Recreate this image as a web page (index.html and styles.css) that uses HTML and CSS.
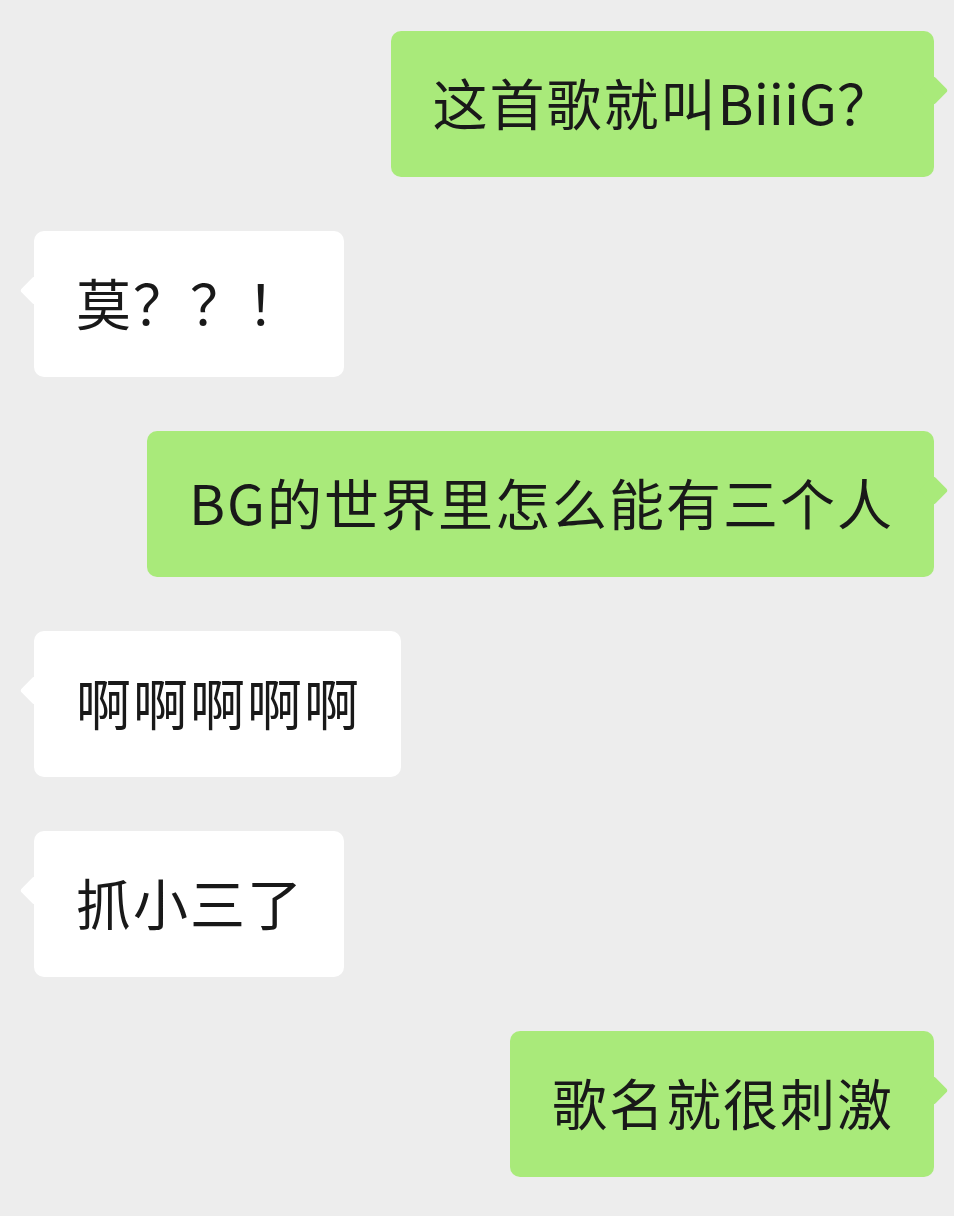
FILE: index.html
```html
<!DOCTYPE html>
<html>
	<head>
		<meta charset="utf-8">
		<title>Chat</title>
		<link rel="stylesheet" href="styles.css">
	</head>
	<body>
		<div class="chat">
			<div class="msg mine">这首歌就叫<span class="latin">BiiiG</span>？</div>
			<div class="msg theirs">莫？？！</div>
			<div class="msg mine">BG的世界里怎么能有三个人</div>
			<div class="msg theirs">啊啊啊啊啊</div>
			<div class="msg theirs">抓小三了</div>
			<div class="msg mine">歌名就很刺激</div>
		</div>
	</body>
</html>
```

FILE: styles.css
```css
body {
	margin: 0;
	background-color: #ededed;
	font-family: "Noto Sans CJK SC", "Noto Sans", sans-serif;
}

.chat {
	display: flex;
	flex-direction: column;
	gap: 54px;
	padding-top: 31px;
	padding-bottom: 40px;
}

.msg {
	position: relative;
	height: 146px;
	box-sizing: border-box;
	padding: 0 40px 6px 42px;
	display: flex;
	align-items: center;
	font-size: 55px;
	letter-spacing: 2px;
	color: #191919;
	border-radius: 10px;
	white-space: nowrap;
}

.msg::after {
	content: "";
	position: absolute;
	top: 49px;
	width: 21px;
	height: 21px;
	border-radius: 3px;
	transform: rotate(45deg);
	background-color: inherit;
}

.latin {
	letter-spacing: 0;
}

.mine {
	align-self: flex-end;
	margin-right: 20px;
	background-color: #a9ea7a;
}

.mine::after {
	right: -10px;
}

.theirs {
	align-self: flex-start;
	margin-left: 34px;
	background-color: #ffffff;
}

.theirs::after {
	left: -10px;
}
```
